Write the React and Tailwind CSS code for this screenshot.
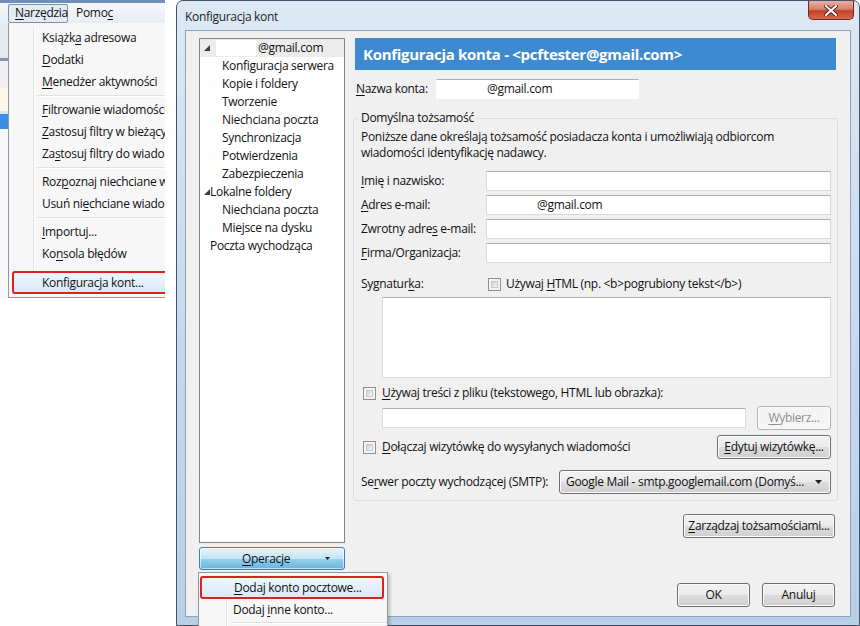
import { useState } from "react";

const U = ({ children }) => <span className="underline underline-offset-[2px] decoration-[1px]">{children}</span>;

function Check() {
  return (
    <span className="flex h-[13px] w-[13px] shrink-0 border border-[#8e8f8f] bg-[#f4f4f4] p-[2px]">
      <span className="flex-1 border border-[#c8c8c8] bg-[linear-gradient(135deg,#cfcfcf,#f7f7f7)]" />
    </span>
  );
}

function Btn({ children, className = "", disabled = false }) {
  return (
    <div
      className={`flex h-[24px] items-center justify-center rounded-[3px] border shadow-[inset_0_0_0_1px_#fbfbfb] ${
        disabled
          ? "border-[#adb2b5] bg-[#f4f4f4] text-[#8d8d8d]"
          : "border-[#707070] bg-[linear-gradient(#f2f2f2_0%,#ebebeb_50%,#dddddd_51%,#cfcfcf_100%)]"
      } ${className}`}
    >
      {children}
    </div>
  );
}

function Field({ className = "", children }) {
  return (
    <div className={`flex h-[20px] items-center border border-[#d5dae1] border-t-[#abadb3] bg-white ${className}`}>
      {children}
    </div>
  );
}

function Tri() {
  return (
    <svg width="6" height="6" viewBox="0 0 6 6" className="shrink-0">
      <path d="M6 0 L6 6 L0 6 Z" fill="#3c3c3c" />
    </svg>
  );
}

const toolsMenu = [
  [<>Książk<U>a</U> adresowa</>, <><U>D</U>odatki</>, <><U>M</U>enedżer aktywności</>],
  [<><U>F</U>iltrowanie wiadomości</>, <><U>Z</U>astosuj filtry w bieżącym</>, <>Za<U>s</U>tosuj filtry do wiadomości</>],
  [<>Roz<U>p</U>oznaj niechciane wiadomości</>, <>Usuń ni<U>e</U>chciane wiadomości</>],
  [<><U>I</U>mportuj...</>, <>Ko<U>n</U>sola błędów</>],
];

const treeRows = [
  { label: "Konfiguracja serwera", indent: true },
  { label: "Kopie i foldery", indent: true },
  { label: "Tworzenie", indent: true },
  { label: "Niechciana poczta", indent: true },
  { label: "Synchronizacja", indent: true },
  { label: "Potwierdzenia", indent: true },
  { label: "Zabezpieczenia", indent: true },
  { label: "Lokalne foldery", arrow: true },
  { label: "Niechciana poczta", indent: true },
  { label: "Miejsce na dysku", indent: true },
  { label: "Poczta wychodząca" },
];

function ToolsMenu() {
  return (
    <div className="flex w-[165px] shrink-0 flex-col overflow-hidden">
      <div className="h-[3px] bg-[#6f8fb9]" />
      <div className="flex h-[20px] items-center bg-[linear-gradient(#f6f8fb,#e7edf5)]">
        <div className="ml-[8px] flex h-[19px] w-[60px] items-center rounded-[2px] border border-[#8090a6] bg-[#e3ebf5] pl-[6px]">
          <span>
            <U>N</U>arzędzia
          </span>
        </div>
        <div className="ml-[8px]">
          Pomo<U>c</U>
        </div>
      </div>
      <div className="flex">
        <div className="flex w-[8px] shrink-0 flex-col">
          <div className="h-[35px] bg-[#e4e9f0]" />
          <div className="h-[3px] bg-[#8795a8]" />
          <div className="h-[27px] bg-[#eef0f3]" />
          <div className="h-[23px] bg-[#fbf7ea]" />
          <div className="h-[3px] bg-[#d6e6f6]" />
          <div className="h-[15px] bg-[#3b8fe3]" />
          <div className="h-[170px] bg-[#f6f8fb]" />
        </div>
        <div className="flex h-[275px] w-[180px] shrink-0 border-b border-l border-[#979797] bg-[#f7f7f7] pb-[3px] pt-[4px]">
          <div className="w-[25px] shrink-0 border-r border-[#e2e3e3]" />
          <div className="flex flex-1 flex-col border-l border-white">
            {toolsMenu.map((group, gi) => (
              <div key={gi} className="flex flex-col">
                {gi > 0 && (
                  <div className="flex h-[6px] items-center pl-[2px]">
                    <div className="h-[2px] flex-1 border-b border-t border-b-white border-t-[#e0e0e0]" />
                  </div>
                )}
                {group.map((item, i) => (
                  <div key={i} className="flex h-[22px] items-center whitespace-nowrap pl-[7px]">
                    <span>{item}</span>
                  </div>
                ))}
              </div>
            ))}
            <div className="h-[6px]" />
            <div className="-ml-[23px] flex h-[23px] items-center rounded-[3px] border-2 border-[#e0201b] bg-[linear-gradient(#f1f6fc,#dae8f7)] pl-[28px]">
              Konfiguracja kont...
            </div>
          </div>
        </div>
      </div>
    </div>
  );
}

function AccountTree() {
  return (
    <div className="flex flex-1 flex-col border border-[#828790] bg-white">
      <div className="flex h-[18px] items-center bg-[#ececec] pl-[4px]">
        <Tri />
        <div className="ml-[6px] h-[16px] w-[40px] bg-white" />
        <span className="ml-[2px]">@gmail.com</span>
      </div>
      {treeRows.map((r, i) => (
        <div key={i} className={`flex h-[18px] items-center ${r.indent ? "pl-[22px]" : "pl-[10px]"}`}>
          {r.arrow && (
            <span className="-ml-[6px]">
              <Tri />
            </span>
          )}
          <span>{r.label}</span>
        </div>
      ))}
    </div>
  );
}

function OperationsMenu() {
  return (
    <div className="absolute left-[-1px] top-[534px] flex h-[70px] w-[190px] border border-[#979797] bg-[#f7f7f7] pt-[3px] shadow-[2px_2px_3px_rgba(0,0,0,0.2)]">
      <div className="w-[28px] shrink-0 border-r border-[#e2e3e3]" />
      <div className="flex flex-1 flex-col border-l border-white">
        <div className="-ml-[28px] mr-[3px] flex h-[23px] items-center rounded-[3px] border-2 border-[#e0201b] bg-[linear-gradient(#f1f6fc,#dae8f7)] pl-[32px]">
          <span>
            <U>D</U>odaj konto pocztowe...
          </span>
        </div>
        <div className="flex h-[22px] items-center pl-[5px]">
          <span>
            Dodaj <U>i</U>nne konto...
          </span>
        </div>
        <div className="ml-[2px] mt-[1px] h-[2px] border-b border-t border-b-white border-t-[#e0e0e0]" />
      </div>
    </div>
  );
}

function AccountDialog() {
  return (
    <div className="flex h-[626px] w-[684px] shrink-0 flex-col rounded-t-[7px] border border-[#44536a] bg-[linear-gradient(#dde8f4,#c3d8ee_60%,#b8cfe8)] px-[8px] pb-[8px]">
      <div className="flex h-[29px] items-start">
        <div className="pt-[7px] text-[#1e1e1e]">Konfiguracja kont</div>
        <div className="-mr-[3px] ml-auto flex h-[19px] w-[46px] items-center justify-center rounded-b-[5px] border border-t-0 border-[#6b2b22] bg-[linear-gradient(#eab0a2,#d8806c_45%,#c2402a_55%,#d66a4c)]">
          <svg width="14" height="11" viewBox="0 0 14 11">
            <path d="M2 1 L12 10 M12 1 L2 10" stroke="#5a2018" strokeWidth="4" strokeLinecap="round" />
            <path d="M2 1 L12 10 M12 1 L2 10" stroke="#ffffff" strokeWidth="2.2" strokeLinecap="round" />
          </svg>
        </div>
      </div>
      <div className="flex flex-1 border border-[#8da2bb] bg-[#f0f0f0] pl-[13px] pt-[7px]">
        <div className="relative flex w-[146px] shrink-0 flex-col">
          <AccountTree />
          <div className="mb-[46px] mt-[4px] flex h-[23px] items-center rounded-[3px] border border-[#3c7fb1] bg-[linear-gradient(#e5f4fc_0%,#c4e5f6_50%,#98d1ef_51%,#68b3db_100%)] shadow-[inset_0_0_0_1px_rgba(255,255,255,0.6)]">
            <span className="ml-[42px]">
              <U>O</U>peracje
            </span>
            <svg width="5" height="3" viewBox="0 0 5 3" className="ml-auto mr-[14px]">
              <path d="M0 0 L5 0 L2.5 3 Z" fill="#222" />
            </svg>
          </div>
          <OperationsMenu />
        </div>

        <div className="ml-[10px] flex w-[483px] flex-col">
          <div className="flex h-[32px] w-[481px] items-center bg-[#3d8ad0] pl-[8px] text-[15px] font-bold tracking-[-0.3px] text-white">
            Konfiguracja konta - &lt;pcftester@gmail.com&gt;
          </div>
          <div className="mt-[9px] flex h-[20px] items-center">
            <span className="ml-[1px] w-[80px]">
              <U>N</U>azwa konta:
            </span>
            <Field className="w-[203px] border-white">
              <span className="ml-[50px]">@gmail.com</span>
            </Field>
          </div>

          <fieldset className="-ml-[2px] mt-[10px] rounded-[3px] border border-[#d5dfe5] pb-[6px] pl-[7px] pr-[6px]">
            <legend className="-ml-[3px] px-[3px]">Domyślna tożsamość</legend>
            <p className="pt-[2px] leading-[16px]">
              Poniższe dane określają tożsamość posiadacza konta i umożliwiają odbiorcom wiadomości identyfikację nadawcy.
            </p>
            <div className="mt-[10px] flex flex-col gap-[4px]">
              {[
                [<><U>I</U>mię i nazwisko:</>, ""],
                [<><U>A</U>dres e-mail:</>, "@gmail.com"],
                [<>Zwrotny adre<U>s</U> e-mail:</>, ""],
                [<><U>F</U>irma/Organizacja:</>, ""],
              ].map(([label, value], i) => (
                <div key={i} className="flex h-[20px] items-center">
                  <span className="w-[125px] shrink-0">{label}</span>
                  <Field className="flex-1">{value && <span className="ml-[50px]">{value}</span>}</Field>
                </div>
              ))}
            </div>

            <div className="mt-[11px] flex h-[20px] items-center">
              <span className="w-[127px] shrink-0">
                Sygnatur<U>k</U>a:
              </span>
              <Check />
              <span className="ml-[5px]">
                Używaj <U>H</U>TML (np. &lt;b&gt;pogrubiony tekst&lt;/b&gt;)
              </span>
            </div>
            <div className="ml-[21px] mt-[3px] h-[81px] border border-[#d5dae1] border-t-[#abadb3] bg-white" />

            <div className="mt-[6px] flex h-[18px] items-center pl-[2px]">
              <Check />
              <span className="ml-[6px]">
                <U>U</U>żywaj treści z pliku (tekstowego, HTML lub obrazka):
              </span>
            </div>
            <div className="ml-[21px] mt-[4px] flex h-[24px] items-center">
              <Field className="w-[364px]" />
              <Btn disabled className="ml-auto w-[74px]">
                <span>
                  <U>W</U>ybierz...
                </span>
              </Btn>
            </div>

            <div className="mt-[5px] flex h-[24px] items-center pl-[2px]">
              <Check />
              <span className="ml-[6px]">
                <U>D</U>ołączaj wizytówkę do wysyłanych wiadomości
              </span>
              <Btn className="ml-auto w-[114px]">
                <span>
                  <U>E</U>dytuj wizytówkę...
                </span>
              </Btn>
            </div>

            <div className="mt-[11px] flex h-[24px] items-center">
              <span className="w-[198px] shrink-0">
                Se<U>r</U>wer poczty wychodzącej (SMTP):
              </span>
              <Btn className="flex-1 !justify-start pl-[6px] pr-[8px]">
                <span className="whitespace-nowrap">Google Mail - smtp.googlemail.com (Domyś...</span>
                <svg width="7" height="4" viewBox="0 0 7 4" className="ml-auto">
                  <path d="M0 0 L7 0 L3.5 4 Z" fill="#222" />
                </svg>
              </Btn>
            </div>
          </fieldset>

          <Btn className="mr-[3px] mt-[13px] w-[152px] self-end">
            <span>
              <U>Z</U>arządzaj tożsamościami...
            </span>
          </Btn>

          <div className="mr-[3px] mt-[45px] flex justify-end gap-[12px]">
            <Btn className="w-[73px]">OK</Btn>
            <Btn className="w-[73px]">Anuluj</Btn>
          </div>
        </div>
      </div>
    </div>
  );
}

export default function App() {
  const [open] = useState(true);
  return (
    <div className="flex h-[626px] w-[860px] overflow-hidden bg-white font-['Open_Sans',sans-serif] text-[12px] tracking-[-0.3px] text-[#111]">
      <ToolsMenu />
      <div className="w-[11px] shrink-0" />
      {open && <AccountDialog />}
    </div>
  );
}
